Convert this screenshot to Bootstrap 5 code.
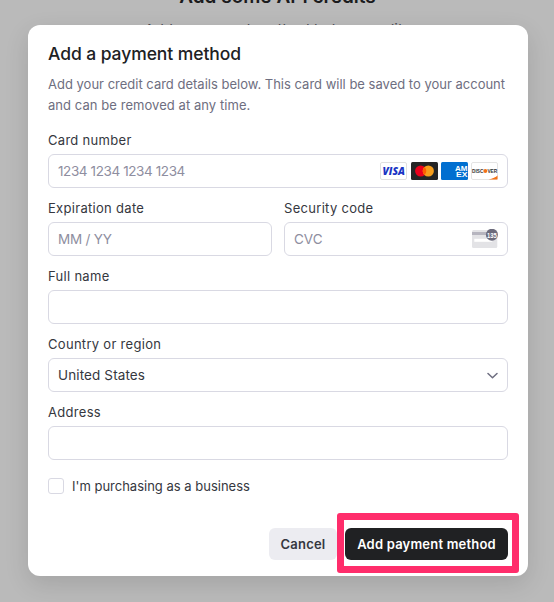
<!DOCTYPE html>
<html lang="en">
<head>
<meta charset="utf-8">
<meta name="viewport" content="width=device-width, initial-scale=1">
<title>Add a payment method</title>
<link href="https://cdn.jsdelivr.net/npm/bootstrap@5.3.0/dist/css/bootstrap.min.css" rel="stylesheet">
<style>
  body { background: #bababa; font-family: Inter, Roboto, sans-serif; font-size: 13px; line-height: 20px; color: #353740; height: 602px; overflow: hidden; }
  .backdrop-copy { left: 1px; right: 0; top: -17px; color: #1b1b1d; }
  .backdrop-copy h1 { font-size: 19px; line-height: 28px; letter-spacing: 0; font-weight: 600; margin: 0 0 9px; }
  .backdrop-copy p { font-size: 15px; line-height: 20px; color: #4d4d55; }
  .dialog { width: 500px; height: 551px; margin: 25px 0 0 28px; padding: 16px 20px; border-radius: 12px; background: #fff; box-shadow: 0 8px 24px rgba(0,0,0,.12); }
  .dialog h2 { font-size: 17.5px; line-height: 26px; font-weight: 550; color: #202123; letter-spacing: -.08px; }
  .intro { line-height: 21px; color: #6e6e80; margin: 7px 0 14px; white-space: nowrap; }
  .t-l2 { letter-spacing: .06px; }
  .fields { gap: 10px; }
  .pair { gap: 12px; }
  .fields .form-label { display: block; margin: 0 0 4px; line-height: 20px; letter-spacing: .3px; }
  .field { height: 34px; border: 1px solid #d9d9e3; border-radius: 6px; padding: 0 9px; font-size: 13.5px; color: #353740; background: #fff; }
  .hint { color: #8e8ea0; }
  .t-num { letter-spacing: -.4px; }
  .t-mm { letter-spacing: -.2px; }
  .t-us { letter-spacing: .12px; }
  .brands { gap: 3px; }
  .form-check-input.tick { width: 16px; height: 16px; margin: 0; border: 1px solid #d9d9e3; border-radius: 3px; }
  .business { margin-top: 6px; }
  .actions .btn { height: 32px; padding: 0; border: 0; border-radius: 6px; font-size: 13px; font-weight: 600; line-height: 32px; letter-spacing: .2px; white-space: nowrap; }
  .btn-cancel, .btn-cancel:hover { background: #ececf1; color: #353740; width: 68px; }
  .btn-add, .btn-add:hover { background: #202123; color: #fff; width: 163px; }
  .highlight { inset: -15px -11px -13px -8px; border: 7px solid #ff2d6b; border-radius: 3px; pointer-events: none; }
</style>
</head>
<body>
<div class="backdrop-copy position-absolute text-center" aria-hidden="true">
  <h1>Add some API credits</h1>
  <p>Add a payment method to buy credits</p>
</div>
<main class="dialog position-relative d-flex flex-column" role="dialog" aria-labelledby="title">
  <h2 id="title" class="m-0">Add a payment method</h2>
  <p class="intro">Add your credit card details below. This card will be saved to your account<br><span class="t-l2">and can be removed at any time.</span></p>
  <form class="fields d-flex flex-column">
    <div>
      <label class="form-label">Card number</label>
      <div class="field d-flex align-items-center justify-content-between">
        <span class="hint t-num">1234 1234 1234 1234</span>
        <span class="brands d-flex">
          <svg width="28" height="18" viewBox="0 0 28 18"><rect x=".5" y=".5" width="26" height="17" rx="1.5" fill="#fff" stroke="#e0e0e0"/><text x="2.5" y="12.8" textLength="22.5" lengthAdjust="spacingAndGlyphs" font-family="Open Sans" font-size="10" font-weight="800" font-style="italic" fill="#1a35c4">VISA</text></svg>
          <svg width="27" height="18" viewBox="0 0 27 18"><rect width="27" height="18" rx="1.5" fill="#252525"/><circle cx="9.7" cy="9" r="5.6" fill="#eb001b"/><circle cx="17.3" cy="9" r="5.6" fill="#f79e1b"/><path d="M13.5 4.9a5.6 5.6 0 0 1 0 8.2 5.6 5.6 0 0 1 0-8.2z" fill="#ff5f00"/></svg>
          <svg width="27" height="18" viewBox="0 0 27 18"><rect width="27" height="18" rx="1.5" fill="#016fd0"/><g font-family="Liberation Sans" font-size="8" font-weight="700" fill="#fff"><text x="14" y="8.6" textLength="12.5" lengthAdjust="spacingAndGlyphs">AM</text><text x="15" y="15" textLength="11.5" lengthAdjust="spacingAndGlyphs">EX</text></g></svg>
          <svg width="27" height="18" viewBox="0 0 27 18"><rect x=".5" y=".5" width="26" height="17" rx="1.5" fill="#fff" stroke="#e4e4e4"/><path d="M17.5 17.5Q24 16 26.5 13.5v4z" fill="#f47216"/><text x="1" y="10.7" textLength="11.3" lengthAdjust="spacingAndGlyphs" font-family="Liberation Sans" font-size="5" font-weight="700" fill="#333">DISC</text><circle cx="14.3" cy="8.9" r="2" fill="#f47216"/><text x="16.4" y="10.7" textLength="9.8" lengthAdjust="spacingAndGlyphs" font-family="Liberation Sans" font-size="5" font-weight="700" fill="#333">VER</text></svg>
        </span>
      </div>
    </div>
    <div class="pair d-flex">
      <div class="w-50">
        <label class="form-label">Expiration date</label>
        <div class="field d-flex align-items-center hint"><span class="t-mm">MM / YY</span></div>
      </div>
      <div class="w-50">
        <label class="form-label">Security code</label>
        <div class="field d-flex align-items-center justify-content-between hint"><span>CVC</span>
          <svg width="26" height="20" viewBox="0 0 26 20"><rect y="1" width="25.3" height="18" rx="1.5" fill="#e3e3e6"/><path d="M0 3h25.3v3H0z" fill="#b6b5bf"/><rect x="2.3" y="9.8" width="18" height="3" fill="#fff"/><circle cx="19.9" cy="5.8" r="6" fill="#6b6a7b"/><text x="15" y="8.5" textLength="9.8" lengthAdjust="spacingAndGlyphs" font-family="Liberation Sans" font-size="7.2" font-weight="700" fill="#fff">135</text></svg>
        </div>
      </div>
    </div>
    <div>
      <label class="form-label">Full name</label>
      <div class="field"></div>
    </div>
    <div>
      <label class="form-label">Country or region</label>
      <div class="field d-flex align-items-center justify-content-between"><span class="t-us">United States</span>
        <svg width="11" height="8" viewBox="0 0 11 8" fill="none" stroke="#6e6e80" stroke-width="1.5" stroke-linecap="round" stroke-linejoin="round"><path d="M1 2.5l4.5 4.3L10 2.5"/></svg>
      </div>
    </div>
    <div>
      <label class="form-label">Address</label>
      <div class="field"></div>
    </div>
    <label class="business d-flex align-items-center gap-2"><input class="form-check-input tick" type="checkbox"><span>I'm purchasing as a business</span></label>
  </form>
  <div class="actions d-flex justify-content-end gap-2 mt-auto">
    <button class="btn btn-cancel" type="button">Cancel</button>
    <div class="position-relative">
      <button class="btn btn-add" type="button">Add payment method</button>
      <div class="highlight position-absolute"></div>
    </div>
  </div>
</main>
<script src="https://cdn.jsdelivr.net/npm/bootstrap@5.3.0/dist/js/bootstrap.bundle.min.js"></script>
</body>
</html>
